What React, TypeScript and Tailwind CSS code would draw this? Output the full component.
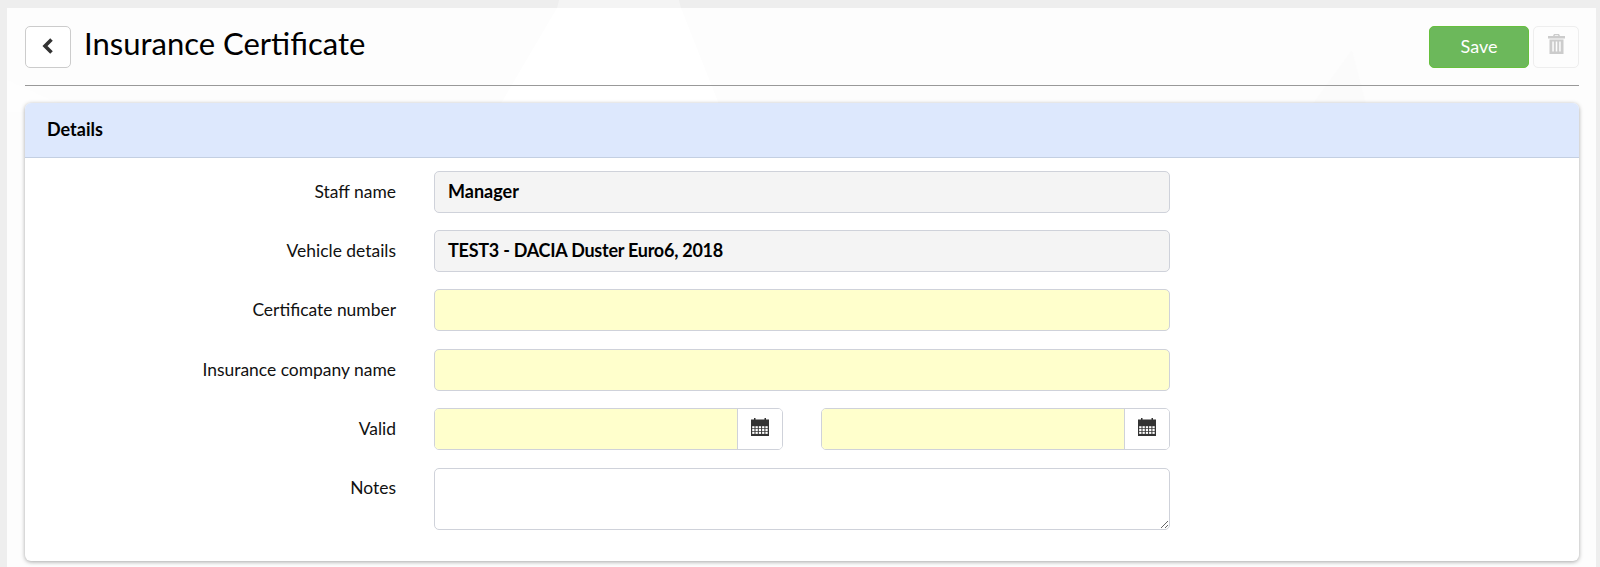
import { ReactNode } from 'react';

function CalendarIcon() {
  return (
    <svg width="18" height="18" viewBox="0 0 18 18" className="text-[#333]">
      <path fill="currentColor" d="M0 1.500h3V0h1.500v1.500h9V0H15v1.500h3V18H0z" />
      <g fill="#fff">
        {[8.200, 11, 13.800].flatMap((y) =>
          [1.200, 4.500, 7.800, 11.100, 14.400].map((x) => <rect key={`${x}-${y}`} x={x} y={y} width="2.300" height="2.100" />)
        )}
      </g>
    </svg>
  );
}

function TrashIcon() {
  return (
    <svg width="17" height="20" viewBox="0 0 17 20" className="text-[#ccc]">
      <path
        fill="currentColor"
        fillRule="evenodd"
        d="M6 0h5l1 2h5v2.500H0V2h5zM7 1.200L6.600 2h3.800l-.4-.8zM1.500 5.500h14V20h-14zM4.300 7.500v10h1.500v-10zM7.750 7.500v10h1.500v-10zM11.200 7.500v10h1.500v-10z"
      />
    </svg>
  );
}

function Row({
  label,
  children,
  className,
  labelClass = 'pt-[10px]',
}: {
  label: string;
  children: ReactNode;
  className?: string;
  labelClass?: string;
}) {
  return (
    <div className={`flex ${className ?? ''}`}>
      <label className={`w-[371px] shrink-0 text-right text-[17.450px] leading-[22px] text-[#111] ${labelClass}`}>{label}</label>
      <div className="ml-[38px] w-[736px]">{children}</div>
    </div>
  );
}

function DateInput() {
  return (
    <div className="flex h-[42px] w-[349px] overflow-hidden rounded-[5px] border border-[#cfd2da]">
      <div className="flex-1 bg-[#ffffcc]" />
      <div className="flex w-[45px] items-center justify-center border-l border-[#cfd2da] bg-white pb-[4px]">
        <CalendarIcon />
      </div>
    </div>
  );
}

export default function App() {
  return (
    <div className="h-[567px] overflow-hidden bg-[#eeeeee] pl-[7px] pr-[4px] pt-[8px] font-['Lato','Open_Sans',sans-serif]">
      <div className="relative h-[559px] bg-[#fdfdfd] pl-[18px] pr-[17px] pt-[18px]">
        <svg className="absolute left-0 top-[-8px] overflow-visible" width="1589" height="112" viewBox="0 0 1589 112">
          <path fill="#ffffff" fillOpacity="0.35" d="M552 0h120l2 8H550z" />
          <path fill="#ffffff" d="M550 8h124l41 104H489z" />
          <path fill="#fbfbfb" d="M1345 50l-45 62h61z" />
          <path fill="#fefefe" d="M0 80l70 32H0z" />
        </svg>
        <div className="relative">
          <div className="box-content flex h-[59px] items-start border-b border-[#999]">
            <button className="flex h-[42px] w-[46px] items-center justify-center rounded-[5px] border border-[#ccc] bg-white pb-[3px]">
              <svg width="12" height="16" viewBox="0 0 12 16">
                <path d="M9.500 1.500L3 8l6.500 6.500" fill="none" stroke="#333" strokeWidth="3.600" />
              </svg>
            </button>
            <h1 className="ml-[13px] text-[31px] font-normal leading-[34px] text-black">Insurance Certificate</h1>
            <div className="ml-auto flex gap-[4px]">
              <button className="h-[42px] w-[100px] rounded-[5px] border border-[#66c03d] bg-[#6cb85b] pb-[2px] text-[18px] text-white">Save</button>
              <button className="flex h-[42px] w-[46px] items-center justify-center rounded-[5px] border border-[#eee] bg-[#fdfdfd] pb-[6px]">
                <TrashIcon />
              </button>
            </div>
          </div>
          <div className="mt-[17px] h-[458px] rounded-[6px] bg-white shadow-[0_1px_4px_rgba(0,0,0,0.35)]">
            <div className="flex h-[55px] items-center rounded-t-[6px] border-b border-[#c3cfe2] bg-[#dde8fd] px-[22px] pb-[2px] text-[18px] font-bold text-black">
              Details
            </div>
            <div className="flex flex-col pt-[13px]">
              <Row label="Staff name">
                <div className="flex h-[42px] items-center rounded-[5px] border border-[#cfd2da] bg-[#f4f4f4] px-[13px] pb-[2px] text-[18px] font-bold text-black">Manager</div>
              </Row>
              <Row label="Vehicle details" className="mt-[17px]">
                <div className="flex h-[42px] items-center rounded-[5px] border border-[#cfd2da] bg-[#f4f4f4] px-[13px] pb-[2px] text-[18px] font-bold tracking-[-0.25px] text-black">TEST3 - DACIA Duster Euro6, 2018</div>
              </Row>
              <Row label="Certificate number" className="mt-[17px]">
                <div className="h-[42px] rounded-[5px] border border-[#cfd2da] bg-[#ffffcc]" />
              </Row>
              <Row label="Insurance company name" className="mt-[18px]">
                <div className="h-[42px] rounded-[5px] border border-[#cfd2da] bg-[#ffffcc]" />
              </Row>
              <Row label="Valid" className="mt-[17px]">
                <div className="flex justify-between">
                  <DateInput />
                  <DateInput />
                </div>
              </Row>
              <Row label="Notes" className="mt-[18px]" labelClass="pt-[9px]">
                <textarea className="block h-[62px] w-full rounded-[5px] border border-[#cfd2da] bg-white" />
              </Row>
            </div>
          </div>
        </div>
      </div>
    </div>
  );
}
